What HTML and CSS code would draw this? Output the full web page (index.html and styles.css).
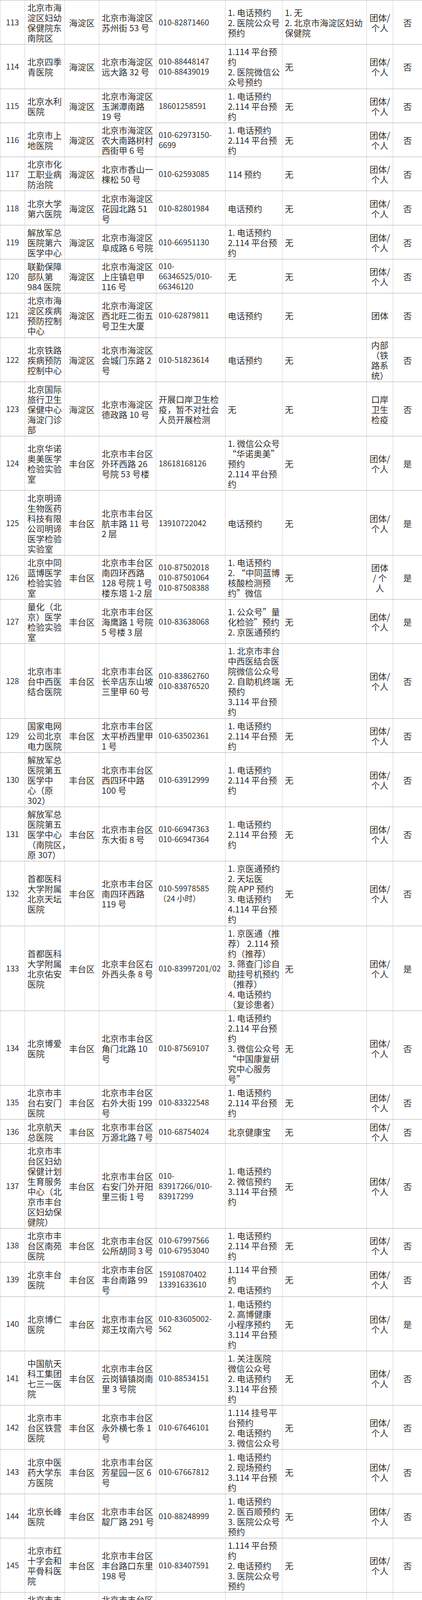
FILE: index.html
```html
<!DOCTYPE html>
<html lang="zh-CN">
<head>
<meta charset="utf-8">
<title>核酸检测机构名单</title>
<link rel="stylesheet" href="styles.css">
</head>
<body>
<table class="list">
<colgroup>
<col class="w-no"><col class="w-name"><col class="w-dist"><col class="w-addr"><col class="w-tel"><col class="w-book"><col class="w-note"><col class="w-type"><col class="w-flag">
</colgroup>
<tbody>
<tr><td class="c-no">113</td><td class="c-name">北京市海<br>淀区妇幼<br>保健院东<br>南院区</td><td class="c-dist">海淀区</td><td class="c-addr">北京市海淀区<br>苏州街 53 号</td><td class="c-tel">010-82871460</td><td class="c-book">1. 电话预约<br>2. 医院公众号<br>预约</td><td class="c-note">1. 无<br>2. 北京市海淀区妇幼<br>保健院</td><td class="c-type">团体/<br>个人</td><td class="c-flag">否</td></tr>
<tr><td class="c-no">114</td><td class="c-name">北京四季<br>青医院</td><td class="c-dist">海淀区</td><td class="c-addr">北京市海淀区<br>远大路 32 号</td><td class="c-tel">010-88448147<br>010-88439019</td><td class="c-book">1.114 平台预<br>约<br>2. 医院微信公<br>众号预约</td><td class="c-note">无</td><td class="c-type">团体/<br>个人</td><td class="c-flag">否</td></tr>
<tr><td class="c-no">115</td><td class="c-name">北京水利<br>医院</td><td class="c-dist">海淀区</td><td class="c-addr">北京市海淀区<br>玉渊潭南路<br>19 号</td><td class="c-tel">18601258591</td><td class="c-book">1. 电话预约<br>2.114 平台预<br>约</td><td class="c-note">无</td><td class="c-type">团体/<br>个人</td><td class="c-flag">否</td></tr>
<tr><td class="c-no">116</td><td class="c-name">北京市上<br>地医院</td><td class="c-dist">海淀区</td><td class="c-addr">北京市海淀区<br>农大南路树村<br>西街甲 6 号</td><td class="c-tel">010-62973150-<br>6699</td><td class="c-book">1. 电话预约<br>2.114 平台预<br>约</td><td class="c-note">无</td><td class="c-type">团体/<br>个人</td><td class="c-flag">否</td></tr>
<tr><td class="c-no">117</td><td class="c-name">北京市化<br>工职业病<br>防治院</td><td class="c-dist">海淀区</td><td class="c-addr">北京市香山一<br>棵松 50 号</td><td class="c-tel">010-62593085</td><td class="c-book">114 预约</td><td class="c-note">无</td><td class="c-type">团体/<br>个人</td><td class="c-flag">否</td></tr>
<tr><td class="c-no">118</td><td class="c-name">北京大学<br>第六医院</td><td class="c-dist">海淀区</td><td class="c-addr">北京市海淀区<br>花园北路 51<br>号</td><td class="c-tel">010-82801984</td><td class="c-book">电话预约</td><td class="c-note">无</td><td class="c-type">团体/<br>个人</td><td class="c-flag">否</td></tr>
<tr><td class="c-no">119</td><td class="c-name">解放军总<br>医院第六<br>医学中心</td><td class="c-dist">海淀区</td><td class="c-addr">北京市海淀区<br>阜成路 6 号院</td><td class="c-tel">010-66951130</td><td class="c-book">1. 电话预约<br>2.114 平台预<br>约</td><td class="c-note">无</td><td class="c-type">团体/<br>个人</td><td class="c-flag">否</td></tr>
<tr><td class="c-no">120</td><td class="c-name">联勤保障<br>部队第<br>984 医院</td><td class="c-dist">海淀区</td><td class="c-addr">北京市海淀区<br>上庄镇皂甲<br>116 号</td><td class="c-tel">010-<br>66346525/010-<br>66346120</td><td class="c-book">无</td><td class="c-note">无</td><td class="c-type">团体/<br>个人</td><td class="c-flag">否</td></tr>
<tr><td class="c-no">121</td><td class="c-name">北京市海<br>淀区疾病<br>预防控制<br>中心</td><td class="c-dist">海淀区</td><td class="c-addr">北京市海淀区<br>西北旺二街五<br>号卫生大厦</td><td class="c-tel">010-62879811</td><td class="c-book">电话预约</td><td class="c-note">无</td><td class="c-type">团体</td><td class="c-flag">否</td></tr>
<tr><td class="c-no">122</td><td class="c-name">北京铁路<br>疾病预防<br>控制中心</td><td class="c-dist">海淀区</td><td class="c-addr">北京市海淀区<br>会城门东路 2<br>号</td><td class="c-tel">010-51823614</td><td class="c-book">电话预约</td><td class="c-note">无</td><td class="c-type">内部<br>（铁<br>路系<br>统）</td><td class="c-flag">否</td></tr>
<tr><td class="c-no">123</td><td class="c-name">北京国际<br>旅行卫生<br>保健中心<br>海淀门诊<br>部</td><td class="c-dist">海淀区</td><td class="c-addr">北京市海淀区<br>德政路 10 号</td><td class="c-tel c-wide">开展口岸卫生检<br>疫，暂不对社会<br>人员开展检测</td><td class="c-book">无</td><td class="c-note">无</td><td class="c-type">口岸<br>卫生<br>检疫</td><td class="c-flag">否</td></tr>
<tr><td class="c-no">124</td><td class="c-name">北京华诺<br>奥美医学<br>检验实验<br>室</td><td class="c-dist">丰台区</td><td class="c-addr">北京市丰台区<br>外环西路 26<br>号院 53 号楼</td><td class="c-tel">18618168126</td><td class="c-book">1. 微信公众号<br>“华诺奥美”<br>预约<br>2.114 平台预<br>约</td><td class="c-note">无</td><td class="c-type">团体/<br>个人</td><td class="c-flag">是</td></tr>
<tr><td class="c-no">125</td><td class="c-name">北京明谛<br>生物医药<br>科技有限<br>公司明谛<br>医学检验<br>实验室</td><td class="c-dist">丰台区</td><td class="c-addr">北京市丰台区<br>航丰路 11 号<br>2 层</td><td class="c-tel">13910722042</td><td class="c-book">电话预约</td><td class="c-note">无</td><td class="c-type">团体/<br>个人</td><td class="c-flag">是</td></tr>
<tr><td class="c-no">126</td><td class="c-name">北京中同<br>蓝博医学<br>检验实验<br>室</td><td class="c-dist">丰台区</td><td class="c-addr">北京市丰台区<br>南四环西路<br>128 号院 1 号<br>楼东塔 1-2 层</td><td class="c-tel">010-87502018<br>010-87501064<br>010-87508388</td><td class="c-book">1. 电话预约<br>2. “中同蓝博<br>核酸检测预<br>约”微信</td><td class="c-note">无</td><td class="c-type">团体<br>/ 个<br>人</td><td class="c-flag">是</td></tr>
<tr><td class="c-no">127</td><td class="c-name">量化（北<br>京）医学<br>检验实验<br>室</td><td class="c-dist">丰台区</td><td class="c-addr">北京市丰台区<br>海鹰路 1 号院<br>5 号楼 3 层</td><td class="c-tel">010-83638068</td><td class="c-book">1. 公众号”量<br>化检验”预约<br>2. 京医通预约</td><td class="c-note">无</td><td class="c-type">团体/<br>个人</td><td class="c-flag">是</td></tr>
<tr><td class="c-no">128</td><td class="c-name">北京市丰<br>台中西医<br>结合医院</td><td class="c-dist">丰台区</td><td class="c-addr">北京市丰台区<br>长辛店东山坡<br>三里甲 60 号</td><td class="c-tel">010-83862760<br>010-83876520</td><td class="c-book">1. 北京市丰台<br>中西医结合医<br>院微信公众号<br>2. 自助机终端<br>预约<br>3.114 平台预<br>约</td><td class="c-note">无</td><td class="c-type">团体/<br>个人</td><td class="c-flag">否</td></tr>
<tr><td class="c-no">129</td><td class="c-name">国家电网<br>公司北京<br>电力医院</td><td class="c-dist">丰台区</td><td class="c-addr">北京市丰台区<br>太平桥西里甲<br>1 号</td><td class="c-tel">010-63502361</td><td class="c-book">1. 电话预约<br>2.114 平台预<br>约</td><td class="c-note">无</td><td class="c-type">团体/<br>个人</td><td class="c-flag">否</td></tr>
<tr><td class="c-no">130</td><td class="c-name">解放军总<br>医院第五<br>医学中<br>心（原<br>302）</td><td class="c-dist">丰台区</td><td class="c-addr">北京市丰台区<br>西四环中路<br>100 号</td><td class="c-tel">010-63912999</td><td class="c-book">1. 电话预约<br>2.114 平台预<br>约</td><td class="c-note">无</td><td class="c-type">团体/<br>个人</td><td class="c-flag">否</td></tr>
<tr><td class="c-no">131</td><td class="c-name">解放军总<br>医院第五<br>医学中心<br>（南院区，<br>原 307）</td><td class="c-dist">丰台区</td><td class="c-addr">北京市丰台区<br>东大街 8 号</td><td class="c-tel">010-66947363<br>010-66947364</td><td class="c-book">1. 电话预约<br>2.114 平台预<br>约</td><td class="c-note">无</td><td class="c-type">团体/<br>个人</td><td class="c-flag">否</td></tr>
<tr><td class="c-no">132</td><td class="c-name">首都医科<br>大学附属<br>北京天坛<br>医院</td><td class="c-dist">丰台区</td><td class="c-addr">北京市丰台区<br>南四环西路<br>119 号</td><td class="c-tel">010-59978585<br>（24 小时）</td><td class="c-book">1. 京医通预约<br>2. 天坛医<br>院 APP 预约<br>3. 电话预约<br>4.114 平台预<br>约</td><td class="c-note">无</td><td class="c-type">团体/<br>个人</td><td class="c-flag">否</td></tr>
<tr><td class="c-no">133</td><td class="c-name">首都医科<br>大学附属<br>北京佑安<br>医院</td><td class="c-dist">丰台区</td><td class="c-addr">北京丰台区右<br>外西头条 8 号</td><td class="c-tel">010-83997201/02</td><td class="c-book">1. 京医通（推<br>荐） 2.114 预<br>约（推荐）<br>3. 筛查门诊自<br>助挂号机预约<br>（推荐）<br>4. 电话预约<br>（复诊患者）</td><td class="c-note">无</td><td class="c-type">团体/<br>个人</td><td class="c-flag">是</td></tr>
<tr><td class="c-no">134</td><td class="c-name">北京博爱<br>医院</td><td class="c-dist">丰台区</td><td class="c-addr">北京市丰台区<br>角门北路 10<br>号</td><td class="c-tel">010-87569107</td><td class="c-book">1. 电话预约<br>2.114 平台预<br>约<br>3. 微信公众号<br>“中国康复研<br>究中心服务<br>号”</td><td class="c-note">无</td><td class="c-type">团体/<br>个人</td><td class="c-flag">否</td></tr>
<tr><td class="c-no">135</td><td class="c-name">北京市丰<br>台右安门<br>医院</td><td class="c-dist">丰台区</td><td class="c-addr">北京市丰台区<br>右外大街 199<br>号</td><td class="c-tel">010-83322548</td><td class="c-book">1. 电话预约<br>2.114 平台预<br>约</td><td class="c-note">无</td><td class="c-type">团体/<br>个人</td><td class="c-flag">否</td></tr>
<tr><td class="c-no">136</td><td class="c-name">北京航天<br>总医院</td><td class="c-dist">丰台区</td><td class="c-addr">北京市丰台区<br>万源北路 7 号</td><td class="c-tel">010-68754024</td><td class="c-book">北京健康宝</td><td class="c-note">无</td><td class="c-type">团体/<br>个人</td><td class="c-flag">否</td></tr>
<tr><td class="c-no">137</td><td class="c-name">北京市丰<br>台区妇幼<br>保健计划<br>生育服务<br>中心（北<br>京市丰台<br>区妇幼保<br>健院）</td><td class="c-dist">丰台区</td><td class="c-addr">北京市丰台区<br>右安门外开阳<br>里三街 1 号</td><td class="c-tel">010-<br>83917266/010-<br>83917299</td><td class="c-book">1. 电话预约<br>2. 微信预约<br>3.114 平台预<br>约</td><td class="c-note">无</td><td class="c-type">团体/<br>个人</td><td class="c-flag">否</td></tr>
<tr><td class="c-no">138</td><td class="c-name">北京市丰<br>台区南苑<br>医院</td><td class="c-dist">丰台区</td><td class="c-addr">北京市丰台区<br>公所胡同 3 号</td><td class="c-tel">010-67997566<br>010-67953040</td><td class="c-book">1. 电话预约<br>2.114 平台预<br>约</td><td class="c-note">无</td><td class="c-type">团体/<br>个人</td><td class="c-flag">否</td></tr>
<tr><td class="c-no">139</td><td class="c-name">北京丰台<br>医院</td><td class="c-dist">丰台区</td><td class="c-addr">北京市丰台区<br>丰台南路 99<br>号</td><td class="c-tel">15910870402<br>13391633610</td><td class="c-book">1.114 平台预<br>约<br>2. 电话预约</td><td class="c-note">无</td><td class="c-type">团体/<br>个人</td><td class="c-flag">否</td></tr>
<tr><td class="c-no">140</td><td class="c-name">北京博仁<br>医院</td><td class="c-dist">丰台区</td><td class="c-addr">北京市丰台区<br>郑王坟南六号</td><td class="c-tel">010-83605002-<br>562</td><td class="c-book">1. 电话预约<br>2. 高博健康<br>小程序预约<br>3.114 平台预<br>约</td><td class="c-note">无</td><td class="c-type">团体/<br>个人</td><td class="c-flag">是</td></tr>
<tr><td class="c-no">141</td><td class="c-name">中国航天<br>科工集团<br>七三一医<br>院</td><td class="c-dist">丰台区</td><td class="c-addr">北京市丰台区<br>云岗镇镇岗南<br>里 3 号院</td><td class="c-tel">010-88534151</td><td class="c-book">1. 关注医院<br>微信公众号<br>2. 电话预约<br>3.114 平台预<br>约</td><td class="c-note">无</td><td class="c-type">团体/<br>个人</td><td class="c-flag">否</td></tr>
<tr><td class="c-no">142</td><td class="c-name">北京市丰<br>台区铁营<br>医院</td><td class="c-dist">丰台区</td><td class="c-addr">北京市丰台区<br>永外横七条 1<br>号</td><td class="c-tel">010-67646101</td><td class="c-book">1.114 挂号平<br>台预约<br>2. 电话预约<br>3. 微信公众号</td><td class="c-note">无</td><td class="c-type">团体/<br>个人</td><td class="c-flag">否</td></tr>
<tr><td class="c-no">143</td><td class="c-name">北京中医<br>药大学东<br>方医院</td><td class="c-dist">丰台区</td><td class="c-addr">北京市丰台区<br>芳星园一区 6<br>号</td><td class="c-tel">010-67667812</td><td class="c-book">1. 电话预约<br>2. 现场预约<br>3.114 平台预<br>约</td><td class="c-note">无</td><td class="c-type">团体/<br>个人</td><td class="c-flag">否</td></tr>
<tr><td class="c-no">144</td><td class="c-name">北京长峰<br>医院</td><td class="c-dist">丰台区</td><td class="c-addr">北京市丰台区<br>靛厂路 291 号</td><td class="c-tel">010-88248999</td><td class="c-book">1. 电话预约<br>2. 医百顺预约<br>3. 医院公众号<br>预约</td><td class="c-note">无</td><td class="c-type">团体/<br>个人</td><td class="c-flag">否</td></tr>
<tr><td class="c-no">145</td><td class="c-name">北京市红<br>十字会和<br>平骨科医<br>院</td><td class="c-dist">丰台区</td><td class="c-addr">北京市丰台区<br>丰台路口东里<br>198 号</td><td class="c-tel">010-83407591</td><td class="c-book">1.114 平台预<br>约<br>2. 电话预约<br>3. 医院公众号<br>预约</td><td class="c-note">无</td><td class="c-type">团体/<br>个人</td><td class="c-flag">否</td></tr>
<tr><td class="c-no">146</td><td class="c-name">北京市丰<br>台区疾病<br>预防控制<br>中心</td><td class="c-dist">丰台区</td><td class="c-addr">北京市丰台区<br>中关村丰台看<br>丹健康科技产<br>业园</td><td class="c-tel">010-63811956</td><td class="c-book">电话预约</td><td class="c-note">无</td><td class="c-type">团体</td><td class="c-flag">否</td></tr>
<tr><td class="c-no">147</td><td class="c-name">军事科学<br>院军事医<br>学研究院<br>微生物流<br>行病研究<br>所</td><td class="c-dist">丰台区</td><td class="c-addr">北京市丰台区<br>东大街 20 号</td><td class="c-tel c-wide">无</td><td class="c-book">无</td><td class="c-note">无</td><td class="c-type">内部<br>（指<br>定）</td><td class="c-flag">否</td></tr>
<tr><td class="c-no">148</td><td class="c-name">解放军疾<br>病预防控<br>制中心</td><td class="c-dist">丰台区</td><td class="c-addr">北京市丰台区<br>东大街 20 号<br>院</td><td class="c-tel c-wide">无</td><td class="c-book">无</td><td class="c-note">无</td><td class="c-type">内部<br>（指<br>定）</td><td class="c-flag">否</td></tr>
<tr><td class="c-no">149</td><td class="c-name">北京奎克<br>医学检验<br>实验室</td><td class="c-dist">石景山<br>区</td><td class="c-addr">北京市石景山<br>区体育产南路<br>6 号院 2 号楼<br>4 楼</td><td class="c-tel">010-68662799</td><td class="c-book">1. 电话预约<br>2. 微信公众号<br>预约</td><td class="c-note">无</td><td class="c-type">团体/<br>个人</td><td class="c-flag">是</td></tr>
<tr><td class="c-no">150</td><td class="c-name">北京大学<br>首钢医院</td><td class="c-dist">石景山<br>区</td><td class="c-addr">北京市石景山<br>区晋元庄路 9<br>号</td><td class="c-tel">010-57830239</td><td class="c-book">1. 电话预约<br>2.114 平台预<br>约</td><td class="c-note">无</td><td class="c-type">团体/<br>个人</td><td class="c-flag">是</td></tr>
<tr><td class="c-no">151</td><td class="c-name">清华大学<br>玉泉医院</td><td class="c-dist">石景山<br>区</td><td class="c-addr">北京市石景山<br>区石景山路 5<br>号</td><td class="c-tel">010-88255992</td><td class="c-book">1.&nbsp; 电话预约<br>2.114 平台预<br>约</td><td class="c-note">无</td><td class="c-type">团体/<br>个人</td><td class="c-flag">是</td></tr>
<tr><td class="c-no">152</td><td class="c-name">北京市石<br>景山医院</td><td class="c-dist">石景山<br>区</td><td class="c-addr">北京市石景山<br>区石景山路<br>24 号全科医<br>学门诊</td><td class="c-tel">010-88429995</td><td class="c-book">1. 电话预约<br>2.114 平台预<br>约<br>3. 微信公众号<br>预约</td><td class="c-note">无</td><td class="c-type">团体/<br>个人</td><td class="c-flag">否</td></tr>
<tr><td class="c-no">153</td><td class="c-name">中部战区<br>疾病预防<br>控制中心</td><td class="c-dist">石景山<br>区</td><td class="c-addr">北京市石景山<br>区黑石路 66<br>号</td><td class="c-tel c-wide">无</td><td class="c-book">无</td><td class="c-note">无</td><td class="c-type">内部<br>（指<br>定）</td><td class="c-flag">否</td></tr>
<tr><td class="c-no">154</td><td class="c-name">中国医学<br>科学院整<br>形外科医<br>院</td><td class="c-dist">石景山<br>区</td><td class="c-addr">北京市石景山<br>区八大处路<br>33 号</td><td class="c-tel">010-88772233</td><td class="c-book">1. 医院 APP 预<br>约 2. 医院公<br>众号预约</td><td class="c-note">无</td><td class="c-type">团体/<br>个人</td><td class="c-flag">否</td></tr>
<tr><td class="c-no">155</td><td class="c-name">中国中医<br>科学院眼<br>科医院</td><td class="c-dist">石景山<br>区</td><td class="c-addr">北京市石景山<br>区鲁谷路 33<br>号</td><td class="c-tel">010-68688877-<br>6652</td><td class="c-book">电话预约</td><td class="c-note">无</td><td class="c-type">团体/<br>个人</td><td class="c-flag">否</td></tr>
<tr><td class="c-no">156</td><td class="c-name">首都医科<br>大学附属<br>北京康复<br>医院</td><td class="c-dist">石景山<br>区</td><td class="c-addr">北京市石景山<br>区八大处西下<br>庄</td><td class="c-tel">010-56981172</td><td class="c-book">电话预约</td><td class="c-note">无</td><td class="c-type">团体/<br>个人</td><td class="c-flag">是</td></tr>
<tr><td class="c-no">157</td><td class="c-name">北京市石<br>景山区中<br>医医院</td><td class="c-dist">石景山<br>区</td><td class="c-addr">北京市石景山<br>区八角北路</td><td class="c-tel">010-68862920</td><td class="c-book">石景山区中医<br>医院微信公众<br>号</td><td class="c-note">无</td><td class="c-type">团体</td><td class="c-flag">否</td></tr>
<tr><td class="c-no">158</td><td class="c-name">北京市石<br>景山区疾<br>病预防控<br>制中心</td><td class="c-dist">石景山<br>区</td><td class="c-addr">北京市石景山<br>区体育场南路<br>6 号院</td><td class="c-tel">010-88661178</td><td class="c-book">电话预约</td><td class="c-note">无</td><td class="c-type">团体</td><td class="c-flag">否</td></tr>
</tbody>
</table>
</body>
</html>
```

FILE: styles.css
```css
html, body {
  margin: 0;
  padding: 0;
  background: #ffffff;
}

body {
  font-family: "Noto Sans CJK SC", sans-serif;
  font-weight: 400;
  color: #303030;
}

.list {
  width: 1080px;
  border-collapse: collapse;
  table-layout: fixed;
  font-size: 22px;
  line-height: 26px;
}

.w-no { width: 63px; }
.w-name { width: 102px; }
.w-dist { width: 88px; }
.w-addr { width: 146px; }
.w-tel { width: 177px; }
.w-book { width: 146px; }
.w-note { width: 216px; }
.w-type { width: 67px; }
.w-flag { width: 75px; }

.list td {
  padding: 4.15px 6px;
  line-height: 26px;
  vertical-align: middle;
  white-space: nowrap;
  border-left: 1px solid #cfcfcf;
  border-right: 1px solid #cfcfcf;
  border-top: 1px solid #a9a9a9;
  border-bottom: 1px solid #a9a9a9;
  text-align: left;
}

.list td.c-no {
  text-align: center;
  font-size: 20px;
  padding-left: 2px;
  padding-right: 2px;
}

.list td.c-dist,
.list td.c-type,
.list td.c-flag {
  text-align: center;
  padding-left: 3px;
  padding-right: 3px;
}

.list td.c-tel {
  font-size: 20px;
}

.list td.c-tel.c-wide {
  font-size: 22px;
}
```
